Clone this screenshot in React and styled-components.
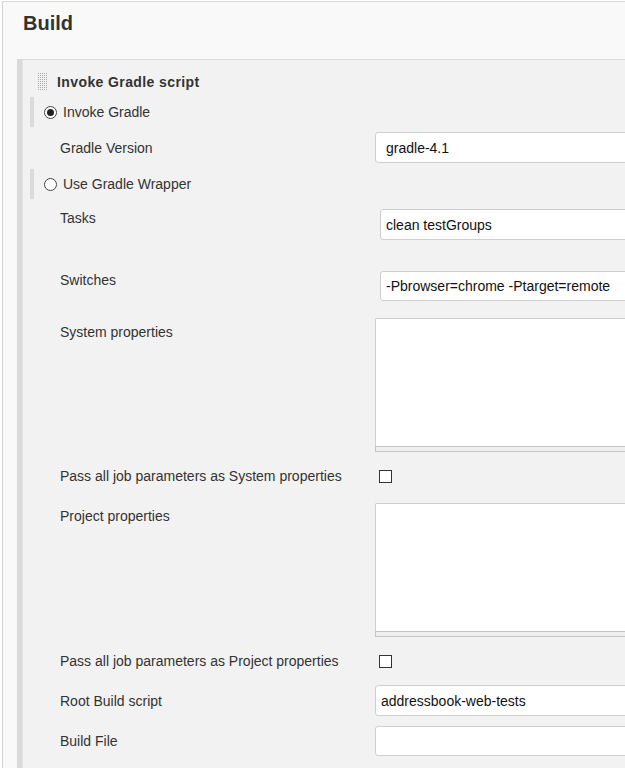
import React from "react";
import styled, { createGlobalStyle } from "styled-components";

const Global = createGlobalStyle`
  html, body { margin: 0; padding: 0; background: #fff; overflow: hidden; }
  body { font-family: "Liberation Sans", Arial, sans-serif; font-size: 14px; color: #333; }
`;

const Page = styled.div`
  margin: 1px 0 0 2px;
  width: 623px;
  height: 767px;
  overflow: hidden;
  border-top: 1px solid #d9d9d9;
  border-left: 1px solid #d4d4d4;
  background: #f9f9f9;
  display: flex;
  flex-direction: column;
  box-sizing: border-box;
`;

const Header = styled.div`
  height: 57px;
  padding: 9px 0 0 20px;
  box-sizing: border-box;
  flex: none;
`;

const Title = styled.h2`
  margin: 0;
  font-size: 20px;
  line-height: 24px;
  font-weight: bold;
  color: #333;
`;

const Section = styled.div`
  flex: 1;
  margin-left: 14px;
  border-top: 1px solid #dcdcdc;
  border-left: 5px solid #dadada;
  background: #f2f2f2;
  min-width: 0;
`;

const Inner = styled.div`
  border-left: 1px solid #e6e6e6;
  height: 100%;
  width: 760px;
`;

const BlockHeader = styled.div`
  display: flex;
  align-items: center;
  gap: 9px;
  padding: 13px 0 7px 15px;
  height: 17px;
`;

const BlockTitle = styled.span`
  font-weight: bold;
  font-size: 14px;
  letter-spacing: 0.4px;
  color: #333;
`;

const Grip = () => (
  <svg width="10" height="17" viewBox="0 0 10 17">
    <defs>
      <pattern id="dots" width="2" height="2" patternUnits="userSpaceOnUse">
        <rect width="1" height="1" fill="#a8a8a8" />
      </pattern>
    </defs>
    <rect width="10" height="17" fill="url(#dots)" />
  </svg>
);

const RadioRow = styled.label`
  display: flex;
  align-items: center;
  height: 30px;
  margin: ${(p) => p.$mt}px 0 0 7px;
  border-left: 4px solid #dadada;
  padding-left: 10px;
  gap: 6px;
  color: #333;
`;

const RadioDot = styled.span`
  width: 11px;
  height: 11px;
  border-radius: 50%;
  border: 1px solid #444;
  background: #fff;
  display: flex;
  align-items: center;
  justify-content: center;
  &::after {
    content: "";
    display: ${(p) => (p.$checked ? "block" : "none")};
    width: 7px;
    height: 7px;
    border-radius: 50%;
    background: #222;
  }
`;

const Row = styled.div`
  display: grid;
  grid-template-columns: 352px 1fr;
  align-items: ${(p) => (p.$top ? "start" : "center")};
  margin-top: ${(p) => p.$mt}px;
  min-height: ${(p) => p.$minH || 0}px;
`;

const Label = styled.div`
  padding: ${(p) => p.$pt || 0}px 0 0 37px;
  line-height: 16px;
  color: #333;
`;

const Field = styled.div`
  padding-left: ${(p) => p.$indent || 0}px;
`;

const Input = styled.div`
  height: ${(p) => p.$h || 31}px;
  box-sizing: border-box;
  border: 1px solid #cfcfcf;
  border-radius: 3px;
  background: #fff;
  display: flex;
  align-items: center;
  padding-left: ${(p) => p.$pad || 5}px;
  color: #111;
  white-space: nowrap;
`;

const TextArea = styled.div`
  height: 128px;
  box-sizing: border-box;
  border: 1px solid #cfcfcf;
  border-bottom: none;
  border-radius: 2px 2px 0 0;
  background: #fff;
`;

const Handle = styled.div`
  height: 6px;
  box-sizing: border-box;
  border: 1px solid #c4c4c4;
  background: #efefef;
`;

const Check = styled.span`
  display: block;
  width: 13px;
  height: 13px;
  box-sizing: border-box;
  border: 1px solid #333;
  background: #fff;
  margin-left: 4px;
`;

export default function App() {
  return (
    <>
      <Global />
      <Page>
        <Header>
          <Title>Build</Title>
        </Header>
        <Section>
          <Inner>
            <BlockHeader>
              <Grip />
              <BlockTitle>Invoke Gradle script</BlockTitle>
            </BlockHeader>
            <RadioRow $mt={0}>
              <RadioDot $checked />
              Invoke Gradle
            </RadioRow>
            <Row $mt={5}>
              <Label>Gradle Version</Label>
              <Field>
                <Input $pad={10}>gradle-4.1</Input>
              </Field>
            </Row>
            <RadioRow $mt={6}>
              <RadioDot />
              Use Gradle Wrapper
            </RadioRow>
            <Row $mt={10} $top>
              <Label $pt={1}>Tasks</Label>
              <Field $indent={5}>
                <Input>clean testGroups</Input>
              </Field>
            </Row>
            <Row $mt={31} $top>
              <Label $pt={1}>Switches</Label>
              <Field $indent={5}>
                <Input $h={30}>-Pbrowser=chrome -Ptarget=remote</Input>
              </Field>
            </Row>
            <Row $mt={17} $top>
              <Label $pt={6}>System properties</Label>
              <Field>
                <TextArea />
                <Handle />
              </Field>
            </Row>
            <Row $mt={10} $minH={28}>
              <Label>Pass all job parameters as System properties</Label>
              <Field>
                <Check />
              </Field>
            </Row>
            <Row $mt={13} $top>
              <Label $pt={5}>Project properties</Label>
              <Field>
                <TextArea />
                <Handle />
              </Field>
            </Row>
            <Row $mt={10} $minH={28}>
              <Label>Pass all job parameters as Project properties</Label>
              <Field>
                <Check />
              </Field>
            </Row>
            <Row $mt={10}>
              <Label>Root Build script</Label>
              <Field>
                <Input>addressbook-web-tests</Input>
              </Field>
            </Row>
            <Row $mt={10}>
              <Label>Build File</Label>
              <Field>
                <Input $h={30} />
              </Field>
            </Row>
          </Inner>
        </Section>
      </Page>
    </>
  );
}
